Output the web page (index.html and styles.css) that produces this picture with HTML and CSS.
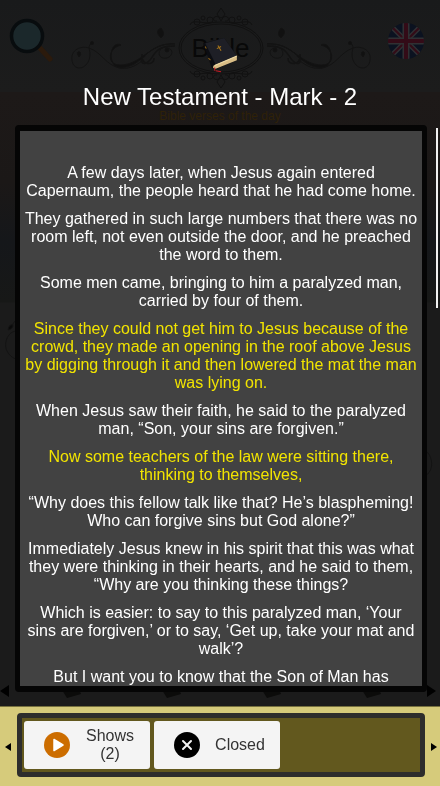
FILE: index.html
```html
<!DOCTYPE html>
<html lang="en">
<head>
<meta charset="utf-8">
<meta name="viewport" content="width=device-width, initial-scale=1">
<title>New Testament - Mark - 2</title>
<link rel="stylesheet" href="styles.css">
</head>
<body>
<div class="page">
  <header class="site-header">
    <svg class="search" viewBox="0 0 44 44" aria-hidden="true">
      <path d="M30 29L41 41" stroke="#2b1a0c" stroke-width="5" stroke-linecap="round"/>
      <circle cx="18" cy="18" r="15.500" fill="#1b282b" stroke="#080c0e" stroke-width="3.500"/>
    </svg>
    <div class="logo">
      <svg class="ornament" viewBox="0 0 302 84" fill="none" aria-hidden="true">
        <defs>
          <g id="swirl" stroke="#131313">
            <path d="M105 38C80 36 72 59 50 59C36 59 38 42 51 39C38 33 36 68 56 61C74 58 78 36 105 38Z" fill="#111" stroke-width="1"/>
            <path d="M105 40C87 40 86 46 80 54C72 63 68 52 75 50M72 48C70 60 85 60 84 52" stroke-width="1.500"/>
            <path d="M3 58C-2 45 10 39 19 42C33 47 35 59 50 62C62 64 68 57 74 54M3 58C9 68 24 58 19 42C19 40 20 38 22 36M100 40C87 40 87 51 93 52C102 54 106 42 96 42"/>
            <circle cx="22" cy="37" r="1.500" fill="#111"/>
            <circle cx="97" cy="44" r="2" fill="#111"/>
            <path d="M9 51Q5 45 10 46Q12 48 9 51ZM91 32Q84 25 91 22Q96 28 91 32Z" fill="#111"/>
          </g>
          <g id="crest" stroke="#111">
            <path d="M151 2L147 8L151 15L155 8ZM151 12C143 7 141 16 147 15M151 12C159 7 161 16 155 15"/>
            <circle cx="140" cy="14" r="3"/><circle cx="162" cy="14" r="3"/>
            <circle cx="133" cy="12" r="2"/><circle cx="169" cy="12" r="2"/>
            <circle cx="127" cy="16" r="3"/><circle cx="175" cy="16" r="3"/>
            <path d="M120 19C122 12 133 19 142 16M182 19C180 12 169 19 160 16"/>
          </g>
        </defs>
        <use href="#swirl"/>
        <use href="#swirl" transform="matrix(-1 0 0 1 302 0)"/>
        <ellipse cx="151" cy="42" rx="42" ry="26" stroke="#111"/>
        <ellipse cx="151" cy="42" rx="40" ry="24" stroke="#111"/>
        <use href="#crest"/>
        <use href="#crest" transform="matrix(1 0 0 -1 0 84)"/>
      </svg>
      <span class="logo-text">Bible</span>
    </div>
    <svg class="flag" viewBox="0 0 36 36" aria-hidden="true">
      <clipPath id="disc"><circle cx="18" cy="18" r="18"/></clipPath>
      <g clip-path="url(#disc)">
        <path d="M0 0H36V36H0Z" fill="#0b1220"/>
        <path d="M0 0L36 36M36 0L0 36" stroke="#303033" stroke-width="5"/>
        <path d="M0 0L36 36M36 0L0 36" stroke="#330b17" stroke-width="2"/>
        <path d="M18 0V36M0 18H36" stroke="#303033" stroke-width="7"/>
        <path d="M18 0V36M0 18H36" stroke="#330b17" stroke-width="4"/>
      </g>
    </svg>
  </header>
  <main class="scene">
    <h2 class="daily">Bible verses of the day</h2>
    <div class="card">
      <svg class="curl" viewBox="0 0 18 50" fill="none" stroke="#131313" aria-hidden="true">
        <path d="M16 16C4 14 -1 28 3 36C7 44 15 46 18 43M8 12Q9 5 18 2"/>
        <path d="M4 15Q5 9 9 10Q9 14 4 15Z" fill="#0a0a0a"/>
      </svg>
      <svg class="curl" viewBox="0 0 18 50" fill="none" stroke="#131313" aria-hidden="true">
        <path d="M2 4C12 2 19 16 14 26Q10 33 2 32"/>
        <path d="M7 44Q2 40 6 35L10 33Q10 41 7 44Z" fill="#0a0a0a"/>
      </svg>
    </div>
    <div class="shelf">
      <svg class="tile" viewBox="0 0 20 12" aria-hidden="true"><path d="M0 3L16 0L19 7L5 11Z" fill="#0b0b0a"/></svg>
      <svg class="tile" viewBox="0 0 20 12" aria-hidden="true"><path d="M0 3L16 0L19 7L5 11Z" fill="#0b0b0a"/></svg>
      <svg class="tile" viewBox="0 0 20 12" aria-hidden="true"><path d="M0 3L16 0L19 7L5 11Z" fill="#0b0b0a"/></svg>
      <svg class="tile" viewBox="0 0 20 12" aria-hidden="true"><path d="M0 3L16 0L19 7L5 11Z" fill="#0b0b0a"/></svg>
    </div>
  </main>
</div>

<div class="overlay" role="dialog" aria-labelledby="chapter">
  <svg class="book" viewBox="0 0 36 36" aria-hidden="true">
    <path d="M2 6L10 29L13 31L34 22V18L22 1Z" fill="#0c0d12"/>
    <path d="M4 6L22 1L34 18L14 26Z" fill="#1e1f26"/>
    <path d="M12 27L34 18V22L14 30Q10 30 12 27Z" fill="#d9bd86"/>
    <path d="M13 27L34 18" stroke="#f0dca8"/>
    <path d="M16 8L19 13M15 11L19 9" stroke="#a87519"/>
    <path d="M4 9L5 11M7 20L9 22" stroke="#8b6118"/>
    <path d="M13 29V32M14 32L19 33" stroke="#c61b24"/>
  </svg>
  <h1 class="title" id="chapter">New Testament - Mark - 2</h1>
  <div class="reader">
    <span class="page-arrow left"></span>
    <article class="panel">
      <p>A few days later, when Jesus again entered Capernaum, the people heard that he had come home.</p>
      <p>They gathered in such large numbers that there was no room left, not even outside the door, and he preached the word to them.</p>
      <p>Some men came, bringing to him a paralyzed man, carried by four of them.</p>
      <p class="marked">Since they could not get him to Jesus because of the crowd, they made an opening in the roof above Jesus by digging through it and then lowered the mat the man was lying on.</p>
      <p>When Jesus saw their faith, he said to the paralyzed man, “Son, your sins are forgiven.”</p>
      <p class="marked">Now some teachers of the law were sitting there, thinking to themselves,</p>
      <p>“Why does this fellow talk like that? He’s blaspheming! Who can forgive sins but God alone?”</p>
      <p>Immediately Jesus knew in his spirit that this was what they were thinking in their hearts, and he said to them, “Why are you thinking these things?</p>
      <p>Which is easier: to say to this paralyzed man, ‘Your sins are forgiven,’ or to say, ‘Get up, take your mat and walk’?</p>
      <p>But I want you to know that the Son of Man has</p>
    </article>
    <span class="page-arrow right"></span>
    <span class="scrollbar"></span>
  </div>
  <footer class="toolbar">
    <span class="bar-arrow left"></span>
    <div class="frame">
      <button class="action" type="button">
        <svg class="icon" viewBox="0 0 26 26" aria-hidden="true">
          <circle cx="13" cy="13" r="13" fill="#cc6d00"/>
          <path d="M10 7.500L19 13L10 18.500Z" fill="#fff" stroke="#fff" stroke-width="1.500" stroke-linejoin="round"/>
        </svg>
        <span class="label">Shows<br>(2)</span>
      </button>
      <button class="action" type="button">
        <svg class="icon" viewBox="0 0 26 26" aria-hidden="true">
          <circle cx="13" cy="13" r="13" fill="#000"/>
          <path d="M9 9L17 17M17 9L9 17" stroke="#f4f4f4" stroke-width="2" stroke-linecap="round"/>
        </svg>
        <span class="label">Closed</span>
      </button>
    </div>
    <span class="bar-arrow right"></span>
  </footer>
</div>
</body>
</html>
```

FILE: styles.css
```css
* {
  box-sizing: border-box;
}

body {
  margin: 0;
  background: #1b1b1b;
  font-family: "Liberation Sans", Arial, sans-serif;
}

h1,
h2,
p {
  margin: 0;
  font-weight: 400;
}

/* Dimmed page behind the reader */
.page {
  display: flex;
  flex-direction: column;
  min-height: 100vh;
}

.site-header {
  display: flex;
  justify-content: space-between;
  align-items: flex-start;
  height: 92px;
  padding: 0 16px 0 9px;
  background: linear-gradient(#191a1b, #1c1c1c);
}

.search {
  width: 44px;
  height: 44px;
  margin-top: 18px;
}

.logo {
  display: grid;
  place-items: center;
  width: 302px;
  margin-top: 6px;
}

.ornament,
.logo-text {
  grid-area: 1 / 1;
}

.ornament {
  width: 302px;
  height: 84px;
}

.logo-text {
  color: #080808;
  font-size: 26px;
}

.flag {
  width: 36px;
  height: 36px;
  margin-top: 23px;
}

.scene {
  display: flex;
  flex: 1;
  flex-direction: column;
  justify-content: space-between;
  padding: 17px 0 87px;
  background: linear-gradient(#1d1918, #1b1817 90px, #15171a 150px, #171817 210px, #1b1b1b 211px);
}

.daily {
  color: #2f2108;
  font-size: 12px;
  line-height: 14px;
  text-align: center;
}

.card {
  display: flex;
  justify-content: space-between;
  height: 180px;
  margin: 0 6px 0 4px;
}

.curl {
  width: 18px;
  height: 50px;
}

.curl:last-child {
  align-self: flex-end;
}

.shelf {
  display: flex;
  justify-content: space-between;
  padding: 0 58px 0 62px;
}

.tile {
  width: 20px;
  height: 12px;
}

/* Reader */
.overlay {
  position: fixed;
  inset: 0;
  display: flex;
  flex-direction: column;
  align-items: center;
}

.book {
  flex: none;
  width: 38px;
  height: 38px;
  margin-top: 37px;
}

.title {
  margin-top: 9px;
  color: #fff;
  font-size: 24px;
  line-height: 26px;
}

.reader {
  display: grid;
  grid-template-columns: 15px minmax(0, 1fr) 9px 4px;
  flex: 1;
  min-height: 0;
  width: 100%;
  padding-top: 15px;
}

.panel {
  display: flex;
  flex-direction: column;
  gap: 10px;
  min-height: 0;
  margin-bottom: 14px;
  padding: 33px 4px 0;
  overflow: hidden;
  border: 5px solid #050505;
  border-top-width: 6px;
  border-bottom-width: 6px;
  border-radius: 4px;
  background: #424242;
  color: #fff;
  font-size: 16px;
  line-height: 18px;
  text-align: center;
}

.panel p {
  flex: none;
}

.panel .marked {
  color: #f2e400;
}

.page-arrow {
  align-self: end;
  margin-bottom: 9px;
  border: 6px solid transparent;
}

.page-arrow.left,
.bar-arrow.left {
  justify-self: start;
  border-left-width: 0;
  border-right-color: #000;
}

.page-arrow.right,
.bar-arrow.right {
  justify-self: end;
  border-right-width: 0;
  border-left-color: #000;
}

.page-arrow.left {
  border-right-width: 9px;
}

.page-arrow.right {
  border-left-width: 9px;
}

.scrollbar {
  width: 2px;
  height: 180px;
  margin-top: 3px;
  background: #f2f2f2;
}

.toolbar {
  display: grid;
  grid-template-columns: 17px minmax(0, 1fr) 15px;
  align-items: center;
  width: 100%;
  height: 80px;
  padding-bottom: 4px;
  border-top: 1px solid #77713f;
  background: #d6cb7b;
}

.frame {
  display: flex;
  gap: 4px;
  height: 64px;
  padding: 3px 2px;
  border: 5px solid #2d2d2c;
  border-radius: 4px;
  background: #62581e;
}

.bar-arrow {
  margin: 4px 3px 0 5px;
  border: 4px solid transparent;
  border-width: 4px 6px;
}

.bar-arrow.right {
  margin: 4px 3px 0 0;
}

.action {
  display: flex;
  align-items: center;
  width: 126px;
  padding: 0 0 0 20px;
  border: 0;
  border-radius: 3px;
  background: #f4f4f4;
  color: #333;
  font: 16px/18px "Liberation Sans", Arial, sans-serif;
}

.icon {
  flex: none;
  width: 26px;
  height: 26px;
}

.label {
  flex: 1;
}
```
